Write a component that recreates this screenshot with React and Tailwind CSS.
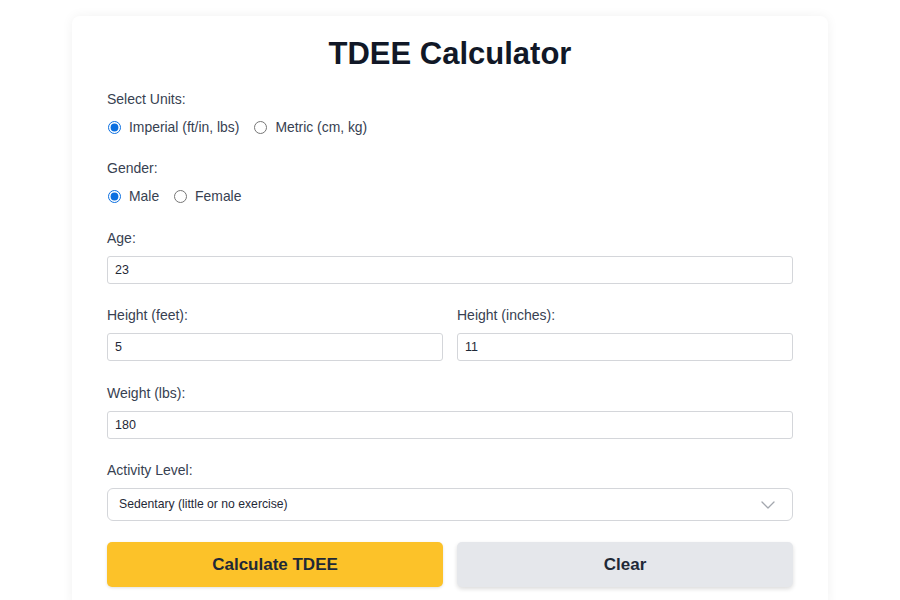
import React, { useState } from 'react';
import { ChevronDown } from 'lucide-react';

function Field({ label, value, onChange }) {
  return (
    <div className="flex-1">
      <label className="block text-[14px] leading-5 text-[#374151] mb-2">{label}</label>
      <input
        type="text"
        value={value}
        onChange={(e) => onChange(e.target.value)}
        className="w-full h-[28px] px-[7px] text-[12.5px] text-[#1f2937] bg-white border border-[#d4d6da] rounded-[3px] outline-none"
      />
    </div>
  );
}

function Radio({ name, label, checked, onChange }) {
  return (
    <label className="flex items-center gap-[8px] cursor-pointer">
      <input
        type="radio"
        name={name}
        checked={checked}
        onChange={onChange}
        className="w-[13px] h-[13px] m-0 accent-[#0b6fe0]"
      />
      <span className="text-[13.9px] leading-5 text-[#374151]">{label}</span>
    </label>
  );
}

export default function App() {
  const [units, setUnits] = useState('imperial');
  const [gender, setGender] = useState('male');
  const [age, setAge] = useState('23');
  const [feet, setFeet] = useState('5');
  const [inches, setInches] = useState('11');
  const [weight, setWeight] = useState('180');
  const [activity, setActivity] = useState('sedentary');

  return (
    <div className="min-h-screen bg-white" style={{ fontFamily: '"Liberation Sans", Arial, sans-serif' }}>
      <div className="max-w-[756px] mx-auto mt-4 bg-white rounded-lg shadow-[0_0_12px_rgba(0,0,0,0.06)] px-[35px] pt-5 pb-6">
        {/* Title */}
        <h1 className="text-[31px] leading-9 font-bold text-[#111827] text-center mb-[17px]">TDEE Calculator</h1>

        {/* Units */}
        <div className="mb-[21px]">
          <div className="text-[14px] leading-5 text-[#374151] mb-2">Select Units:</div>
          <div className="flex items-center gap-[15px] pl-px">
            <Radio name="units" label="Imperial (ft/in, lbs)" checked={units === 'imperial'} onChange={() => setUnits('imperial')} />
            <Radio name="units" label="Metric (cm, kg)" checked={units === 'metric'} onChange={() => setUnits('metric')} />
          </div>
        </div>

        {/* Gender */}
        <div className="mb-[22px]">
          <div className="text-[14px] leading-5 text-[#374151] mb-2">Gender:</div>
          <div className="flex items-center gap-[15px] pl-px">
            <Radio name="gender" label="Male" checked={gender === 'male'} onChange={() => setGender('male')} />
            <Radio name="gender" label="Female" checked={gender === 'female'} onChange={() => setGender('female')} />
          </div>
        </div>

        <div className="mb-[21px]">
          <Field label="Age:" value={age} onChange={setAge} />
        </div>

        <div className="flex gap-[14px] mb-[22px]">
          <Field label="Height (feet):" value={feet} onChange={setFeet} />
          <Field label="Height (inches):" value={inches} onChange={setInches} />
        </div>

        <div className="mb-[21px]">
          <Field label="Weight (lbs):" value={weight} onChange={setWeight} />
        </div>

        {/* Activity */}
        <div className="mb-[21px]">
          <label className="block text-[14px] leading-5 text-[#374151] mb-2">Activity Level:</label>
          <div className="relative">
            <select
              value={activity}
              onChange={(e) => setActivity(e.target.value)}
              className="w-full h-[33px] pl-[11px] pr-8 appearance-none text-[12.2px] text-[#1f2937] bg-white border border-[#d4d6da] rounded-[6px] outline-none"
            >
              <option value="sedentary">Sedentary (little or no exercise)</option>
              <option value="light">Lightly active (1-3 days/week)</option>
              <option value="moderate">Moderately active (3-5 days/week)</option>
              <option value="very">Very active (6-7 days/week)</option>
              <option value="extra">Extra active (physical job)</option>
            </select>
            <ChevronDown className="absolute right-[13px] top-1/2 -translate-y-1/2 w-6 h-6 text-[#a3a7ae] pointer-events-none" strokeWidth={1.3} />
          </div>
        </div>

        {/* Buttons */}
        <div className="flex gap-[14px]">
          <button className="flex-1 h-[45px] rounded-[5px] bg-[#fcc229] text-[#1f2937] text-[17px] font-bold shadow-[0_1px_3px_rgba(0,0,0,0.12)]">
            Calculate TDEE
          </button>
          <button className="flex-1 h-[45px] rounded-[5px] bg-[#e5e7eb] text-[#1f2937] text-[17px] font-bold shadow-[0_2px_4px_rgba(0,0,0,0.14)]">
            Clear
          </button>
        </div>
      </div>
    </div>
  );
}
